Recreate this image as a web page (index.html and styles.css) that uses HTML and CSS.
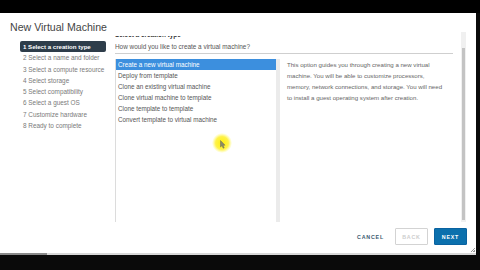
FILE: index.html
```html
<!DOCTYPE html>
<html>
<head>
<meta charset="utf-8">
<link rel="stylesheet" href="styles.css">
</head>
<body>
<div class="screen">
  <div class="topbar"></div>
  <div class="dialog">
    <h1 class="title">New Virtual Machine</h1>
    <div class="body">
      <ol class="steps">
        <li class="step active">1 Select a creation type</li>
        <li class="step">2 Select a name and folder</li>
        <li class="step">3 Select a compute resource</li>
        <li class="step">4 Select storage</li>
        <li class="step">5 Select compatibility</li>
        <li class="step">6 Select a guest OS</li>
        <li class="step">7 Customize hardware</li>
        <li class="step">8 Ready to complete</li>
      </ol>
      <div class="main">
        <h2 class="page-title">Select a creation type</h2>
        <p class="question">How would you like to create a virtual machine?</p>
        <div class="panes">
          <ul class="options">
            <li class="option selected">Create a new virtual machine</li>
            <li class="option">Deploy from template</li>
            <li class="option">Clone an existing virtual machine</li>
            <li class="option">Clone virtual machine to template</li>
            <li class="option">Clone template to template</li>
            <li class="option">Convert template to virtual machine</li>
          </ul>
          <p class="desc">This option guides you through creating a new virtual machine. You will be able to customize processors, memory, network connections, and storage. You will need to install a guest operating system after creation.</p>
        </div>
      </div>
      <div class="scrollbar"><div class="thumb"></div></div>
    </div>
    <div class="footer">
      <button class="btn btn-flat">CANCEL</button>
      <button class="btn btn-outline" disabled>BACK</button>
      <button class="btn btn-primary">NEXT</button>
    </div>
    <span class="grip"></span>
  </div>
  <div class="bottomline"></div>
  <div class="cursor">
    <svg class="arrow" width="6" height="9" viewBox="0 0 6 9"><path d="M0.5 0.5 L0.5 7 L2 5.6 L3.2 8.2 L4.2 7.8 L3 5.2 L5 5.2 Z" fill="#8a8a6a" stroke="#6d6d55" stroke-width="0.5"/></svg>
  </div>
</div>
</body>
</html>
```
FILE: styles.css
```css
* { box-sizing: border-box; }
html, body { margin: 0; padding: 0; }
body {
  background: #000;
  font-family: "Liberation Sans", Arial, sans-serif;
  width: 480px;
  height: 270px;
  overflow: hidden;
}
.screen { position: relative; width: 480px; height: 270px; background: #0a0a0a; }
.topbar { height: 13px; background: #000; }
.dialog {
  position: relative;
  width: 476px;
  height: 240px;
  background: #fff;
  display: flex;
  flex-direction: column;
}
.title {
  margin: 0;
  height: 19px;
  padding: 10px 0 0 10px;
  font-size: 10.6px;
  line-height: 9px;
  font-weight: normal;
  color: #444;
  white-space: nowrap;
}
.body { display: flex; height: 190px; }
.steps {
  list-style: none;
  margin: 0;
  padding: 9px 0 0 20px;
  width: 115px;
  flex: none;
}
.step {
  height: 11.3px;
  line-height: 11.3px;
  padding-left: 3px;
  font-size: 6.4px;
  color: #7a7a7a;
  white-space: nowrap;
}
.step.active {
  width: 86px;
  background: #2e3d4a;
  color: #fff;
  font-weight: bold;
  font-size: 6.1px;
  border-radius: 2px;
  height: 11px;
  line-height: 11px;
  margin-bottom: 0.3px;
}
.main {
  width: 340px;
  flex: none;
  margin-top: 4px;
  overflow: hidden;
}
.page-title {
  margin: -5px 0 0;
  font-size: 6.4px;
  line-height: 8px;
  font-weight: bold;
  color: #333;
}
.question {
  margin: 4px 2px 0 0;
  padding-bottom: 2px;
  font-size: 6.4px;
  line-height: 8px;
  color: #555;
  border-bottom: 1px solid #cfcfcf;
}
.panes { display: flex; margin-top: 5px; height: 163px; }
.options {
  list-style: none;
  margin: 0;
  padding: 0;
  width: 165px;
  flex: none;
  border-left: 1px solid #dcdcdc;
  border-right: 4px solid #ebebeb;
}
.option {
  height: 11px;
  line-height: 11px;
  padding-left: 2px;
  font-size: 6.3px;
  color: #555;
  white-space: nowrap;
}
.option.selected { background: #3c8fde; color: #fff; }
.desc {
  margin: 0;
  padding-left: 7px;
  width: 167px;
  font-size: 6.1px;
  line-height: 11px;
  color: #666;
}
.scrollbar {
  margin-left: 6px;
  width: 5px;
  height: 190px;
  background: #f0f0f0;
  padding: 16px 1px 0;
  flex: none;
}
.thumb { width: 3px; height: 172px; background: #c3c3c3; }
.footer {
  display: flex;
  justify-content: flex-end;
  align-items: flex-start;
  height: 31px;
  padding: 6px 9px 0 0;
}
.btn {
  width: 33px;
  height: 17px;
  padding: 0;
  margin: 0;
  font-family: "Liberation Sans", Arial, sans-serif;
  font-size: 5.3px;
  font-weight: bold;
  letter-spacing: 0.8px;
  border-radius: 1px;
  text-align: center;
}
.btn-flat { background: transparent; border: none; color: #3b5a70; margin-right: 8px; }
.btn-outline { background: #fff; border: 1px solid #d3d3d3; color: #cdcdcd; margin-right: 6px; }
.btn-primary { background: #0b70ad; border: 1px solid #0a62a0; color: #fff; }
.grip {
  position: absolute;
  right: 1px;
  bottom: 1px;
  width: 4px;
  height: 4px;
  background: linear-gradient(135deg, transparent 45%, #999 45%, #999 60%, transparent 60%, transparent 75%, #999 75%);
}
.bottomline {
  height: 2px;
  width: 476px;
  background: linear-gradient(to right, #8a8a8a 0, #8a8a8a 47px, #d8d8d8 47px);
}
.cursor {
  position: absolute;
  left: 212px;
  top: 133px;
  width: 20px;
  height: 20px;
  border-radius: 50%;
  background: radial-gradient(circle, rgba(255,238,0,0.95) 0, rgba(255,240,40,0.85) 45%, rgba(255,250,120,0.4) 62%, rgba(255,255,255,0) 72%);
}
.arrow { position: absolute; left: 8px; top: 7px; }
```
